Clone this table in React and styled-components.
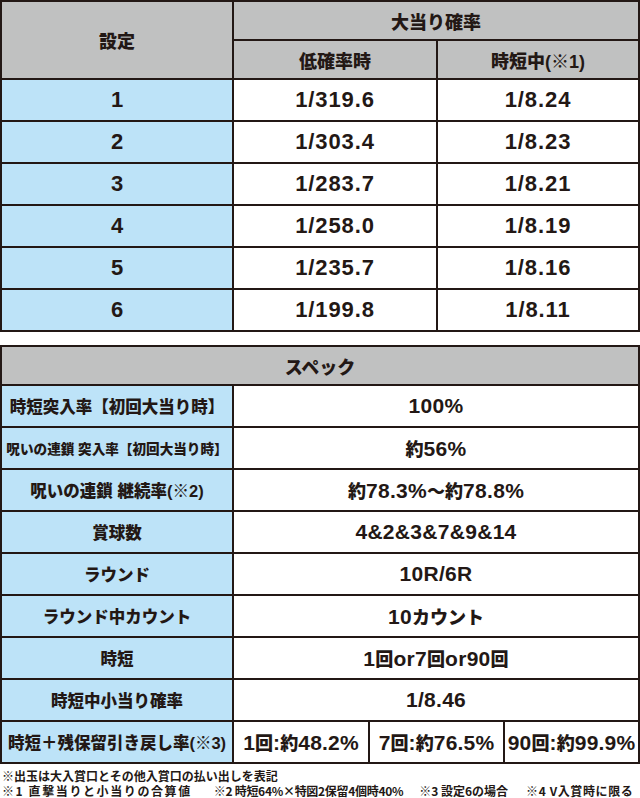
import React from "react";
import styled, { createGlobalStyle } from "styled-components";

const Global = createGlobalStyle`
  html, body { margin: 0; padding: 0; background: #ffffff; }
  body {
    font-family: "Liberation Sans", "Noto Sans CJK JP", sans-serif;
    color: #231815;
    font-weight: 700;
  }
`;

const Page = styled.div`
  width: 640px;
  display: flex;
  flex-direction: column;
`;

const Grid = styled.div`
  display: grid;
  grid-template-columns: ${(p) => p.$cols};
  grid-template-rows: ${(p) => p.$rows};
  gap: 2px;
  padding: 2px;
  background: #231815;
  margin-top: ${(p) => p.$top || 0}px;
`;

const tones = {
  head: "#c0c1c1",
  blue: "#bde3f8",
  white: "#ffffff",
};

const Cell = styled.div`
  display: flex;
  align-items: center;
  justify-content: center;
  background: ${(p) => tones[p.$tone || "white"]};
  grid-column: ${(p) => p.$col || "auto"};
  grid-row: ${(p) => p.$row || "auto"};
  font-size: ${(p) => p.$size || 21}px;
  letter-spacing: ${(p) => p.$ls || 0}px;
  white-space: pre;
  font-family: "Liberation Sans", "Noto Sans CJK JP", sans-serif;
  font-weight: 700;
`;

const Text = styled.span`
  display: inline-block;
`;

const Kanji = styled.span`
  font-family: "Noto Sans CJK JP", sans-serif;
  font-weight: 900;
  font-size: ${(p) => p.$scale || 0.86}em;
  letter-spacing: 0;
`;

const CJK = /([\u203b\u3000-\u30ff\u3400-\u9fff\uff00-\uffef]+)/;

function Mixed({ text, scale }) {
  return (
    <Text>
      {text.split(CJK).map((part, i) =>
        CJK.test(part) ? (
          <Kanji key={i} $scale={scale}>
            {part}
          </Kanji>
        ) : (
          <React.Fragment key={i}>{part}</React.Fragment>
        )
      )}
    </Text>
  );
}

const Notes = styled.div`
  display: flex;
  flex-direction: column;
  padding: 4px 0 0 2px;
  font-family: "Noto Sans CJK JP", sans-serif;
  font-size: 12px;
  line-height: 15px;
  font-weight: 700;
  color: #231815;
  white-space: pre;
`;

const NoteLine = styled.div`
  display: flex;
`;

const NoteItem = styled.span`
  letter-spacing: ${(p) => p.$ls || 0}px;
  margin-left: ${(p) => p.$ml || 0}px;
`;

const probRows = [
  ["1", "1/319.6", "1/8.24"],
  ["2", "1/303.4", "1/8.23"],
  ["3", "1/283.7", "1/8.21"],
  ["4", "1/258.0", "1/8.19"],
  ["5", "1/235.7", "1/8.16"],
  ["6", "1/199.8", "1/8.11"],
];

const specRows = [
  ["時短突入率【初回大当り時】", 16.5, "100%"],
  ["呪いの連鎖 突入率【初回大当り時】", 13.6, "約56%"],
  ["呪いの連鎖 継続率(※2)", 16.5, "約78.3%〜約78.8%"],
  ["賞球数", 16.5, "4&2&3&7&9&14"],
  ["ラウンド", 16.5, "10R/6R"],
  ["ラウンド中カウント", 16.5, "10カウント"],
  ["時短", 16.5, "1回or7回or90回"],
  ["時短中小当り確率", 16.5, "1/8.46"],
];

const lastValues = ["1回:約48.2%", "7回:約76.5%", "90回:約99.9%"];

const notes = [
  { text: "※1 直撃当りと小当りの合算値", ls: 1.6, ml: 0 },
  { text: "※2 時短64%×特図2保留4個時40%", ls: -0.3, ml: 22 },
  { text: "※3 設定6の場合", ls: 0, ml: 16 },
  { text: "※4 V入賞時に限る", ls: 0.6, ml: 18 },
];

export default function App() {
  return (
    <Page>
      <Global />
      <Grid $cols="230px 202px 200px" $rows="37px 37px repeat(6, 40px)">
        <Cell $tone="head" $row="1 / span 2" $size={18}>
          <Mixed text="設定" scale={1} />
        </Cell>
        <Cell $tone="head" $col="2 / span 2" $size={18}>
          <Mixed text="大当り確率" scale={1} />
        </Cell>
        <Cell $tone="head" $size={18}>
          <Mixed text="低確率時" scale={1} />
        </Cell>
        <Cell $tone="head" $size={18}>
          <Mixed text="時短中(※1)" scale={1} />
        </Cell>
        {probRows.map(([s, a, b]) => (
          <React.Fragment key={s}>
            <Cell $tone="blue" $size={22}>
              <Text>{s}</Text>
            </Cell>
            <Cell $size={22} $ls={0.9}>
              <Text>{a}</Text>
            </Cell>
            <Cell $size={22} $ls={0.9}>
              <Text>{b}</Text>
            </Cell>
          </React.Fragment>
        ))}
      </Grid>

      <Grid
        $top={13}
        $cols="230px 134px 133px 133px"
        $rows="37px repeat(9, 40px)"
      >
        <Cell $tone="head" $col="1 / span 4" $size={18}>
          <Mixed text="スペック" scale={1} />
        </Cell>
        {specRows.map(([label, size, value]) => (
          <React.Fragment key={label}>
            <Cell $tone="blue" $size={size}>
              <Mixed text={label} scale={1} />
            </Cell>
            <Cell $col="2 / span 3" $size={21} $ls={0.3}>
              <Mixed text={value} />
            </Cell>
          </React.Fragment>
        ))}
        <Cell $tone="blue" $size={16.5}>
          <Mixed text="時短＋残保留引き戻し率(※3)" scale={1} />
        </Cell>
        {lastValues.map((v) => (
          <Cell key={v} $size={21} $ls={0.2}>
            <Mixed text={v} />
          </Cell>
        ))}
      </Grid>

      <Notes>
        <NoteLine>
          <NoteItem>※出玉は大入賞口とその他入賞口の払い出しを表記</NoteItem>
        </NoteLine>
        <NoteLine>
          {notes.map((n) => (
            <NoteItem key={n.text} $ls={n.ls} $ml={n.ml}>
              {n.text}
            </NoteItem>
          ))}
        </NoteLine>
      </Notes>
    </Page>
  );
}
